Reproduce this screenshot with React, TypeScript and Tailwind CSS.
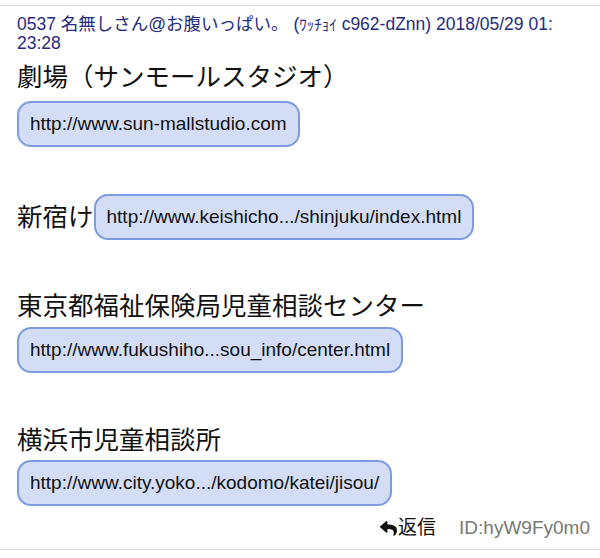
import React from "react";
import { FaReply } from "react-icons/fa";

const LinkBox: React.FC<{ href: string }> = ({ href }) => (
    <span className="inline-block rounded-[14px] border-2 border-[#7d9ce0] bg-[#d3def6] px-[11px] py-[10px] text-[19px] leading-[22px] text-[#111]">
        {href}
    </span>
);

export default function App() {
    return (
        <div className="w-[600px] h-[558px] bg-white pt-[5px] font-['Liberation_Sans','Noto_Sans_CJK_JP',sans-serif]">
            <div className="border-t-[1.5px] border-[#dedede]">
                {/* Header */}
                <div className="pl-[17px] pr-[6px] pt-[9px] text-[17.5px] leading-[18px] text-[#252b7c]">
                    0537 名無しさん@お腹いっぱい。 (<span className="text-[15px]">ﾜｯﾁｮｲ</span> c962-dZnn) 2018/05/29 01:
                    <br />
                    23:28
                </div>

                {/* Body */}
                <div className="px-[17px] text-[25.5px] text-[#111]">
                    <div className="mt-[5px] leading-[40px]">劇場（サンモールスタジオ）</div>
                    <div className="mt-[4px]">
                        <LinkBox href="http://www.sun-mallstudio.com" />
                    </div>

                    <div className="mt-[47px] flex items-center">
                        <span className="leading-[40px]">新宿け</span>
                        <LinkBox href="http://www.keishicho.../shinjuku/index.html" />
                    </div>

                    <div className="mt-[46px] leading-[40px]">東京都福祉保険局児童相談センター</div>
                    <div className="mt-[1px]">
                        <LinkBox href="http://www.fukushiho...sou_info/center.html" />
                    </div>

                    <div className="mt-[47px] leading-[40px]">横浜市児童相談所</div>
                    <div>
                        <LinkBox href="http://www.city.yoko.../kodomo/katei/jisou/" />
                    </div>
                </div>

                {/* Footer */}
                <div className="mt-[12px] flex items-center justify-end pr-[10px] text-[19px] leading-[20px]">
                    <span className="flex items-center text-[#111]">
                        <FaReply className="h-[17px] w-[17px]" />
                        <span className="ml-[1px]">返信</span>
                    </span>
                    <span className="ml-[23px] text-[#777]">ID:hyW9Fy0m0</span>
                </div>
                <div className="mt-[11px] border-t-[1.5px] border-[#dedede]" />
            </div>
        </div>
    );
}
